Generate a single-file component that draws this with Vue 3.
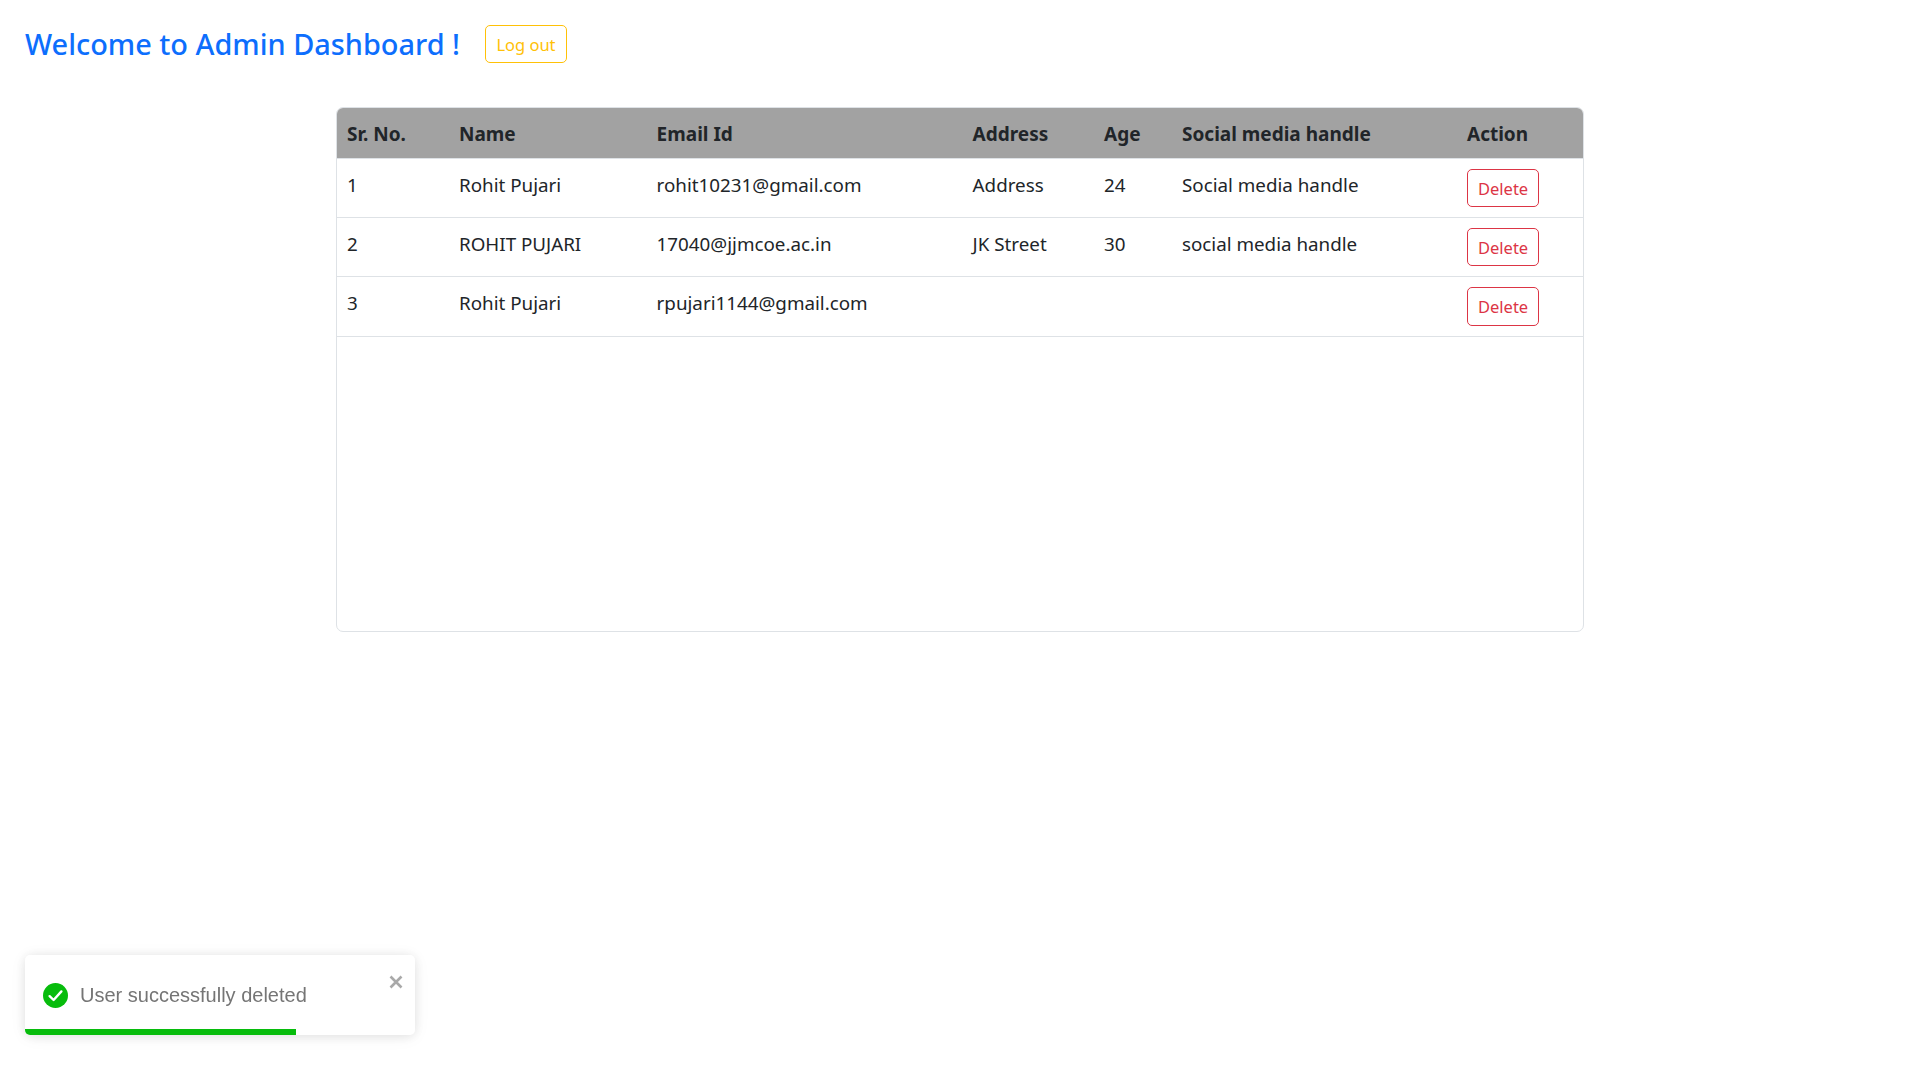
<template>
  <div class="page">
    <header class="top">
      <h1 class="title">Welcome to Admin Dashboard !</h1>
      <button class="btn btn-logout" type="button">Log out</button>
    </header>

    <div class="table-card">
      <table class="users">
        <colgroup>
          <col class="c-no" />
          <col class="c-name" />
          <col class="c-email" />
          <col class="c-address" />
          <col class="c-age" />
          <col class="c-social" />
          <col class="c-action" />
        </colgroup>
        <thead>
          <tr>
            <th>Sr. No.</th>
            <th>Name</th>
            <th>Email Id</th>
            <th>Address</th>
            <th>Age</th>
            <th>Social media handle</th>
            <th>Action</th>
          </tr>
        </thead>
        <tbody>
          <tr v-for="(user, i) in users" :key="user.email">
            <td>{{ i + 1 }}</td>
            <td>{{ user.name }}</td>
            <td>{{ user.email }}</td>
            <td>{{ user.address }}</td>
            <td>{{ user.age }}</td>
            <td>{{ user.social }}</td>
            <td><button class="btn btn-delete" type="button">Delete</button></td>
          </tr>
        </tbody>
      </table>
    </div>

    <div class="toast" role="alert">
      <div class="toast-body">
        <svg class="toast-icon" viewBox="0 0 25 25" aria-hidden="true">
          <circle cx="12.5" cy="12.5" r="12.5" fill="#07bc0c" />
          <path d="M6.6 13.2l4 3.8 7.8-8.6" fill="none" stroke="#fff" stroke-width="2.4" stroke-linecap="round" stroke-linejoin="round" />
        </svg>
        <span class="toast-text">User successfully deleted</span>
      </div>
      <svg class="toast-close" viewBox="0 0 14 14" aria-hidden="true">
        <path d="M1.5 1.5l11 11M12.5 1.5l-11 11" fill="none" stroke="#a9a9a9" stroke-width="2.6" />
      </svg>
      <div class="toast-progress"></div>
    </div>
  </div>
</template>

<script setup>
const users = [
  { name: "Rohit Pujari", email: "rohit10231@gmail.com", address: "Address", age: 24, social: "Social media handle" },
  { name: "ROHIT PUJARI", email: "17040@jjmcoe.ac.in", address: "JK Street", age: 30, social: "social media handle" },
  { name: "Rohit Pujari", email: "rpujari1144@gmail.com", address: "", age: "", social: "" },
];
</script>

<style>
html,
body {
  margin: 0;
  background: #fff;
}
</style>

<style scoped>
.page {
  min-height: 1080px;
  box-sizing: border-box;
  padding: 25px 0 0;
  font-family: "Noto Sans", "Open Sans", sans-serif;
  color: #212529;
}

.top {
  display: flex;
  align-items: center;
  gap: 25px;
  padding-left: 25px;
  height: 38px;
}

.title {
  margin: 0 0 1px;
  font-size: 28.9px;
  font-weight: 500;
  color: #0d6efd;
  white-space: nowrap;
}

.btn {
  box-sizing: border-box;
  height: 38.2px;
  padding: 0 10px;
  background: #fff;
  border: 1px solid;
  border-radius: 5px;
  font-family: inherit;
  font-size: 16.5px;
}

.btn-logout {
  width: 82px;
  color: #ffc107;
  border-color: #ffc107;
}

.btn-delete {
  display: block;
  width: 72px;
  color: #dc3545;
  border-color: #dc3545;
}

.table-card {
  box-sizing: border-box;
  width: 1248px;
  height: 525px;
  margin: 44px auto 0;
  border: 1px solid #dee2e6;
  border-radius: 7px;
  overflow: hidden;
}

.users {
  width: 100%;
  table-layout: fixed;
  border-collapse: collapse;
  font-size: 18.8px;
}

.c-no { width: 112px; }
.c-name { width: 197.6px; }
.c-email { width: 316px; }
.c-address { width: 131.4px; }
.c-age { width: 78px; }
.c-social { width: 285px; }

th {
  height: 48px;
  padding: 2px 10px 0;
  background: #a2a2a2;
  border-bottom: 1px solid #dee2e6;
  text-align: left;
  font-size: 19px;
  font-weight: 700;
  white-space: nowrap;
}

td {
  padding: 10px;
  border-bottom: 1px solid #dee2e6;
  vertical-align: top;
  line-height: 32px;
  white-space: nowrap;
}

.toast {
  position: fixed;
  left: 25px;
  bottom: 45px;
  width: 390px;
  height: 80px;
  box-sizing: border-box;
  display: flex;
  align-items: center;
  padding: 0 18px 0 18px;
  background: #fff;
  border-radius: 5px;
  box-shadow: 0 1px 12px rgba(0, 0, 0, 0.1), 0 2px 18px rgba(0, 0, 0, 0.05);
  overflow: hidden;
}

.toast-body {
  display: flex;
  align-items: center;
  gap: 12px;
}

.toast-icon {
  width: 25px;
  height: 25px;
  flex: none;
}

.toast-text {
  font-family: "Liberation Sans", Arial, sans-serif;
  font-size: 20px;
  color: #757575;
  white-space: nowrap;
}

.toast-close {
  position: absolute;
  top: 20px;
  right: 12px;
  width: 14px;
  height: 14px;
}

.toast-progress {
  position: absolute;
  left: 0;
  bottom: 0;
  width: 271px;
  height: 6px;
  background: #07bc0c;
}
</style>
